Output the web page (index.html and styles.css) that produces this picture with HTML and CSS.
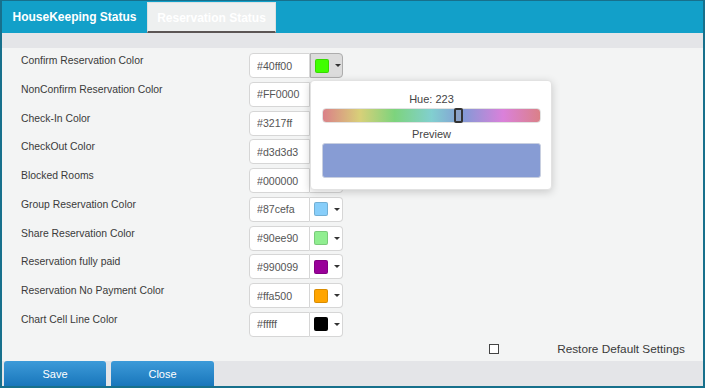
FILE: index.html
```html
<!DOCTYPE html>
<html lang="en">
<head>
  <meta charset="UTF-8">
  <title>Color Settings</title>
  <link rel="stylesheet" href="styles.css">
</head>
<body>
  <div class="window">
    <div class="tabs">
      <div class="tab tab-main">HouseKeeping Status</div>
      <div class="tab tab-other">Reservation Status</div>
    </div>
    <div class="strip"></div>

    <div class="content">
      <div class="rows">
        <div class="row">
          <label class="row-label">Confirm Reservation Color</label>
          <div class="picker">
            <input class="picker-text" value="#40ff00">
            <button class="picker-btn open"><span class="swatch" style="background:#40ff00"></span><span class="caret"></span></button>
            <div class="popover">
              <div class="pop-title">Hue: 223</div>
              <div class="hue-bar"><span class="hue-thumb" style="left:62%"></span></div>
              <div class="pop-title">Preview</div>
              <div class="preview" style="background:#879cd4"></div>
            </div>
          </div>
        </div>
        <div class="row">
          <label class="row-label">NonConfirm Reservation Color</label>
          <div class="picker">
            <input class="picker-text" value="#FF0000">
            <button class="picker-btn"><span class="swatch" style="background:#ff0000"></span><span class="caret"></span></button>
          </div>
        </div>
        <div class="row">
          <label class="row-label">Check-In Color</label>
          <div class="picker">
            <input class="picker-text" value="#3217ff">
            <button class="picker-btn"><span class="swatch" style="background:#3217ff"></span><span class="caret"></span></button>
          </div>
        </div>
        <div class="row">
          <label class="row-label">CheckOut Color</label>
          <div class="picker">
            <input class="picker-text" value="#d3d3d3">
            <button class="picker-btn"><span class="swatch" style="background:#d3d3d3"></span><span class="caret"></span></button>
          </div>
        </div>
        <div class="row">
          <label class="row-label">Blocked Rooms</label>
          <div class="picker">
            <input class="picker-text" value="#000000">
            <button class="picker-btn"><span class="swatch" style="background:#000000"></span><span class="caret"></span></button>
          </div>
        </div>
        <div class="row">
          <label class="row-label">Group Reservation Color</label>
          <div class="picker">
            <input class="picker-text" value="#87cefa">
            <button class="picker-btn"><span class="swatch" style="background:#87cefa"></span><span class="caret"></span></button>
          </div>
        </div>
        <div class="row">
          <label class="row-label">Share Reservation Color</label>
          <div class="picker">
            <input class="picker-text" value="#90ee90">
            <button class="picker-btn"><span class="swatch" style="background:#90ee90"></span><span class="caret"></span></button>
          </div>
        </div>
        <div class="row">
          <label class="row-label">Reservation fully paid</label>
          <div class="picker">
            <input class="picker-text" value="#990099">
            <button class="picker-btn"><span class="swatch" style="background:#990099"></span><span class="caret"></span></button>
          </div>
        </div>
        <div class="row">
          <label class="row-label">Reservation No Payment Color</label>
          <div class="picker">
            <input class="picker-text" value="#ffa500">
            <button class="picker-btn"><span class="swatch" style="background:#ffa500"></span><span class="caret"></span></button>
          </div>
        </div>
        <div class="row">
          <label class="row-label">Chart Cell Line Color</label>
          <div class="picker">
            <input class="picker-text" value="#fffff">
            <button class="picker-btn"><span class="swatch" style="background:#000000"></span><span class="caret"></span></button>
          </div>
        </div>
      </div>

      <div class="restore">
        <input type="checkbox" class="check" id="restore">
        <label for="restore" class="restore-label">Restore Default Settings</label>
      </div>
    </div>

    <div class="footer">
      <button class="btn">Save</button>
      <button class="btn">Close</button>
    </div>
  </div>
</body>
</html>
```

FILE: styles.css
```css
body { margin: 0; font-family: "Liberation Sans", Arial, sans-serif; background: #fff; }

.window { width: 705px; height: 388px; box-sizing: border-box; border: 2px solid #17708c; border-top-width: 1px; display: flex; flex-direction: column; background: #f3f4f4; }

.tabs { height: 32px; flex: none; background: #12a0c9; display: flex; align-items: flex-end; }
.tab { box-sizing: border-box; font-weight: bold; font-size: 12px; color: #fff; display: flex; align-items: center; justify-content: center; white-space: nowrap; }
.tab-main { height: 32px; width: 145px; }
.tab-other { height: 31px; width: 129px; background: #eef0f0; border: 1px solid #dde1e1; border-bottom: 2px solid #5b5555; padding-top: 1px; }

.strip { height: 15px; flex: none; background: #e4e5e8; }

.content { flex: 1; padding: 5px 18px 0 19px; display: flex; flex-direction: column; }
.rows { display: flex; flex-direction: column; }
.row { height: 28.75px; display: flex; align-items: flex-start; }
.row-label { width: 228px; font-size: 10.4px; line-height: 13px; padding-top: 1px; color: #3a3a3a; }

.picker { position: relative; display: flex; height: 25px; }
.picker-text { box-sizing: border-box; width: 61px; height: 25px; margin: 0; padding: 0 0 0 7px; border: 1px solid #d6d6d6; border-radius: 4px 0 0 4px; background: #fff; font-family: "Liberation Sans", Arial, sans-serif; font-size: 10.6px; color: #555; outline: none; }
.picker-btn { box-sizing: border-box; width: 33px; height: 25px; margin: 0; padding: 0 0 0 4px; border: 1px solid #d6d6d6; border-left: none; border-radius: 0 4px 4px 0; background: #fff; display: flex; align-items: center; }
.picker-btn.open { background: #dcdcdc; border-color: #adadad; border-left: 1px solid #adadad; }
.swatch { width: 14px; height: 14px; box-sizing: border-box; border-radius: 2px; border: 1px solid rgba(0,0,0,.15); }
.caret { width: 0; height: 0; margin-left: 6px; border-left: 3px solid transparent; border-right: 3px solid transparent; border-top: 3px solid #333; }

.popover { position: absolute; left: 61px; top: 27px; width: 242px; height: 110px; box-sizing: border-box; padding: 12px 10px 0 11px; background: #fff; border: 1px solid #e2e2e2; border-radius: 4px; box-shadow: 0 2px 8px rgba(0,0,0,.18); z-index: 5; }
.pop-title { text-align: center; font-size: 11px; line-height: 13px; color: #444; }
.hue-bar { position: relative; height: 15px; margin: 2px 0 5px; border-radius: 4px; border: 1px solid #e2e2e2; box-sizing: border-box; background: linear-gradient(to right, hsl(355,55%,68%), hsl(55,55%,66%) 17%, hsl(120,50%,66%) 33%, hsl(180,45%,66%) 50%, hsl(225,50%,68%) 65%, hsl(300,55%,68%) 83%, hsl(355,55%,68%)); }
.hue-thumb { position: absolute; top: -1px; width: 9px; height: 15px; margin-left: -4px; box-sizing: border-box; border: 2px solid #333; border-radius: 2px; background: #8ba2c8; }
.preview { height: 35px; margin-top: 2px; border: 1px solid #c8cfe0; border-radius: 3px; box-sizing: border-box; }

.restore { display: flex; align-items: center; justify-content: flex-end; margin-top: 1px; }
.check { appearance: none; width: 10px; height: 10px; margin: 0 58px 0 0; border: 1px solid #444; background: #fff; box-sizing: border-box; }
.restore-label { font-size: 11.8px; color: #3a3a3a; }

.footer { height: 25px; flex: none; background: #e4e5e8; display: flex; gap: 5px; padding-left: 2px; }
.btn { width: 102px; height: 25px; margin: 0; border: none; border-radius: 3px 3px 0 0; background: linear-gradient(#3d9bd9, #1976bb); color: #fff; font-family: "Liberation Sans", Arial, sans-serif; font-size: 11px; }
.btn + .btn { width: 103px; }
```
